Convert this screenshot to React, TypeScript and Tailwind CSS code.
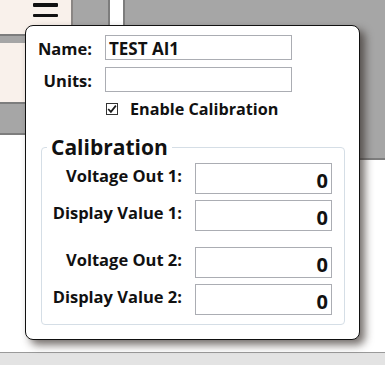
import React from 'react'

const font = "font-['Open_Sans','Noto_Sans',sans-serif]"

function Hamburger() {
  return (
    <div className="flex flex-col gap-[7px] pt-[3px] pl-[33px]">
      <div className="w-[25px] h-[3.5px] bg-[#111] rounded-[1px]" />
      <div className="w-[25px] h-[3.5px] bg-[#111] rounded-[1px]" />
    </div>
  )
}

function CheckBox() {
  return (
    <div className="w-[12px] h-[12px] border border-[#333] bg-white flex items-center justify-center">
      <svg width="10" height="10" viewBox="0 0 10 10">
        <path d="M1.2 5 L3.9 7.9 L8.9 1.6" fill="none" stroke="#1a1a1a" strokeWidth="1.7" />
      </svg>
    </div>
  )
}

function CalRow({ label, value, first }: { label: string; value: string; first?: boolean }) {
  return (
    <>
      <div className={`text-right text-[16.5px] leading-[22px] font-bold pt-[2px] ${first ? 'mt-[10px]' : ''}`}>
        {label}
      </div>
      <div
        className={`h-[31px] border border-[#abadb3] bg-white flex justify-end pr-[3px] pt-[6px] text-[20px] leading-[22px] font-bold ${first ? 'mt-[10px]' : ''}`}
      >
        {value}
      </div>
    </>
  )
}

export default function App() {
  return (
    <div className={`relative w-[385px] h-[365px] overflow-hidden bg-white flex flex-col text-[#111] ${font}`}>
      {/* app behind the dialog */}
      <div className="flex flex-1">
        <div className="w-[73px] flex flex-col bg-[#a6a6a6]">
          <div className="h-[34px] bg-[#f9f1eb] rounded-br-[6px] border-r-2 border-[#8a8684]">
            <Hamburger />
          </div>
          <div className="h-[9px] border-t-2 border-[#7d7d7d]" />
          <div className="h-[59px] bg-[#f9f1eb]" />
          <div className="h-[33px] border-t-2 border-b-2 border-[#7d7d7d]" />
          <div className="flex-1 bg-white" />
        </div>
        <div className="flex-1 flex flex-col">
          <div className="h-[160px] flex">
            <div className="w-[37px] bg-[#a6a6a6] border-r-2 border-[#7d7d7d]" />
            <div className="w-[13px] bg-white" />
            <div className="flex-1 bg-[#a6a6a6] border-l-2 border-b-2 border-[#7d7d7d]" />
          </div>
          <div className="flex-1 bg-white" />
        </div>
      </div>
      <div className="h-[13px] bg-[#e3e3e3] border-t border-[#9a9a9a]" />

      {/* channel settings popup */}
      <div className="absolute left-[25px] top-[25px] w-[335px] h-[315px] bg-white border border-[#111] rounded-[8px] shadow-[5px_5px_8px_rgba(45,35,30,0.65)] pt-[9px]">
        <div className="grid grid-cols-[66px_187px] gap-x-[13px] gap-y-[6px]">
          <div className="text-right text-[16.5px] leading-[25px] font-bold pt-[1px]">Name:</div>
          <div className="h-[25px] border border-[#abadb3] pl-[3px] text-[17px] leading-[23px] font-bold pt-[1px]">
            TEST AI1
          </div>
          <div className="text-right text-[16.5px] leading-[25px] font-bold pt-[1px]">Units:</div>
          <div className="h-[25px] border border-[#abadb3]" />
          <div className="col-start-2 h-[20px] flex items-center gap-[12px] pl-[1px]">
            <CheckBox />
            <span className="text-[16.2px] font-bold leading-[20px]">Enable Calibration</span>
          </div>
        </div>

        <fieldset className="mt-[17px] ml-[15px] w-[304px] border border-[#d5dee6] rounded-[4px] pb-[9px]">
          <legend className="ml-[5px] px-[4px] text-[21px] leading-[22px] font-bold">Calibration</legend>
          <div className="grid grid-cols-[140px_137px] gap-x-[13px] gap-y-[6px] pt-[5px]">
            <CalRow label="Voltage Out 1:" value="0" />
            <CalRow label="Display Value 1:" value="0" />
            <CalRow label="Voltage Out 2:" value="0" first />
            <CalRow label="Display Value 2:" value="0" />
          </div>
        </fieldset>
      </div>
    </div>
  )
}
